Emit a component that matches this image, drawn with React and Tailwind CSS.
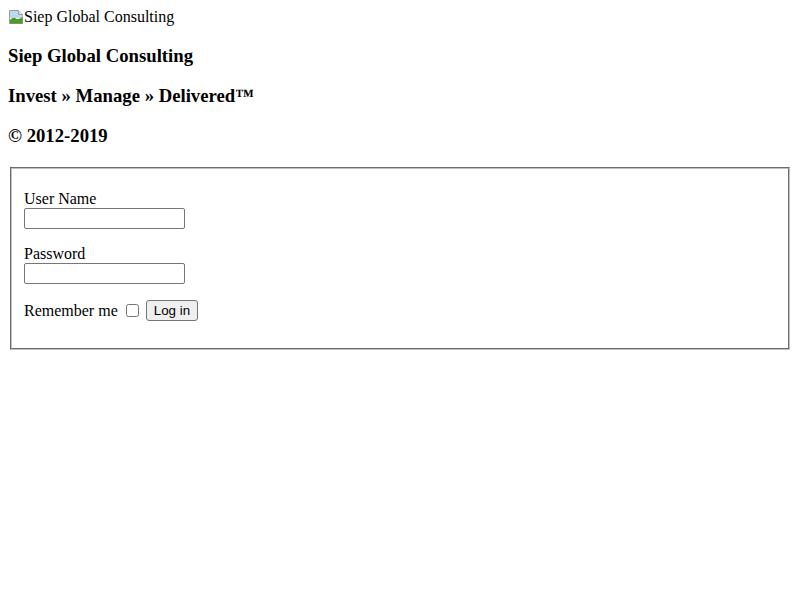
import React from "react";

function BrokenImage() {
  return (
    <svg width="16" height="16" viewBox="0 0 16 16" className="inline-block align-[-3px]">
      <path d="M1.5 1.5h9l4 4v9h-13z" fill="#fff" stroke="#9a9a9a" />
      <path d="M2 2h8.5v4h4v3L2 9z" fill="#bcd9f2" />
      <path d="M2 14.5V11c2-2 4-3 6-1.5 2 1.3 4 0 6.5-1.5v6.5z" fill="#4c9a2a" />
      <path d="M10.5 1.5v4h4" fill="#e8e8e8" stroke="#9a9a9a" />
    </svg>
  );
}

export default function App() {
  return (
    <div className="px-2 pt-2 font-['Liberation_Serif',serif] text-[16px] text-black bg-white min-h-[600px]">
      <div className="leading-[18px] h-[18px] whitespace-nowrap">
        <BrokenImage />
        <span>Siep Global Consulting</span>
      </div>
      <h3 className="mt-[18.72px] text-[18.72px] font-bold leading-[21.5px]">Siep Global Consulting</h3>
      <h3 className="mt-[18.72px] text-[18.72px] font-bold leading-[21.5px]">Invest » Manage » Delivered™</h3>
      <h3 className="mt-[18.72px] text-[18.72px] font-bold leading-[21.5px]">© 2012-2019</h3>
      <fieldset className="mt-[20.5px] mx-[2px] border-2 [border-style:groove] border-[#c0c0c0] px-3 pt-[4.6px] pb-[10px]">
        <div className="mt-4">
          <div className="leading-[18px]">User Name</div>
          <input type="text" className="block w-[161px] h-[21px] border border-[#767676] rounded-[2px] bg-white px-[2px]" />
        </div>
        <div className="mt-4">
          <div className="leading-[18px]">Password</div>
          <input type="password" className="block w-[161px] h-[21px] border border-[#767676] rounded-[2px] bg-white px-[2px]" />
        </div>
        <div className="mt-4 mb-4 flex items-center h-[22px]">
          <span>Remember me</span>
          <input type="checkbox" className="ml-[8px] mr-[7px] w-[13px] h-[13px]" />
          <button className="h-[21px] px-[7px] border border-[#767676] rounded-[3px] bg-[#efefef] font-['Liberation_Sans',sans-serif] text-[13.33px] leading-[16px]">Log in</button>
        </div>
      </fieldset>
    </div>
  );
}
